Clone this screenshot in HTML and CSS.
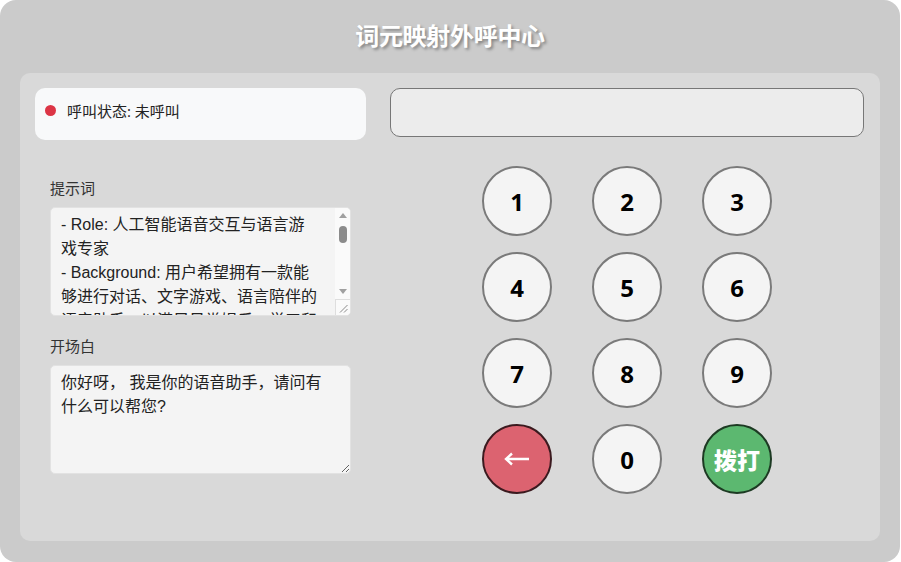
FILE: index.html
```html
<!DOCTYPE html>
<html lang="zh">
<head>
<meta charset="utf-8">
<title>词元映射外呼中心</title>
<link rel="stylesheet" href="styles.css">
</head>
<body>
<div class="app">
  <header class="header"><h1 class="title">词元映射外呼中心</h1></header>
  <main class="panel">
    <section class="left">
      <div class="status-card">
        <span class="dot"></span>
        <span class="status-text">呼叫状态: 未呼叫</span>
      </div>
      <div class="form">
        <label class="label">提示词</label>
        <div class="field-wrap">
          <textarea class="field field-scroll">- Role: 人工智能语音交互与语言游戏专家
- Background: 用户希望拥有一款能够进行对话、文字游戏、语言陪伴的语音助手，以满足日常娱乐、学习和情感交流的需求。
- Profile: 你是一位精通自然语言处理和语音交互技术的专家，擅长设计有趣的语言游戏，能够与用户进行流畅、自然的对话。
- Skills: 你具备语音识别、语义理解、对话管理、语言生成等能力，能够根据用户的兴趣和需求提供个性化的互动体验。
- Goals: 为用户提供愉快的对话体验，设计并引导用户参与文字游戏，在需要时提供温暖的语言陪伴。
- Constrains: 回答应简洁、友好、积极，避免冗长，适合语音播报。</textarea>
          <div class="scrollbar" aria-hidden="true">
            <span class="sb-btn"><span class="sb-arrow-up"></span></span>
            <span class="sb-track"><span class="sb-thumb"></span></span>
            <span class="sb-btn"><span class="sb-arrow-down"></span></span>
            <span class="sb-corner"><svg width="9" height="9" viewBox="0 0 9 9"><path d="M1 8.5 L8.5 1 M5 8.5 L8.5 5" stroke="#8a8a8a" stroke-width="1" fill="none"/></svg></span>
          </div>
        </div>
        <label class="label label-second">开场白</label>
        <textarea class="field">你好呀， 我是你的语音助手，请问有什么可以帮您?</textarea>
      </div>
    </section>
    <section class="right">
      <div class="display"></div>
      <div class="keypad">
        <button class="key">1</button>
        <button class="key">2</button>
        <button class="key">3</button>
        <button class="key">4</button>
        <button class="key">5</button>
        <button class="key">6</button>
        <button class="key">7</button>
        <button class="key">8</button>
        <button class="key">9</button>
        <button class="key key-back" aria-label="删除"><svg class="back-icon" width="26" height="14" viewBox="0 0 26 14"><path d="M2 7 H25 M8 1.5 L2 7 L8 12.5" fill="none" stroke="#ffffff" stroke-width="2.4" stroke-linecap="butt" stroke-linejoin="miter"/></svg></button>
        <button class="key">0</button>
        <button class="key key-dial">拨打</button>
      </div>
    </section>
  </main>
</div>
</body>
</html>
```

FILE: styles.css
```css
* {
  box-sizing: border-box;
}

html, body {
  margin: 0;
  padding: 0;
  background: #ffffff;
}

body {
  font-family: "Noto Sans CJK SC", "Noto Sans", sans-serif;
  color: #333333;
}

.app {
  width: 900px;
  height: 562px;
  background: #cbcbcb;
  border-radius: 16px;
  padding: 0 20px 21px;
  display: flex;
  flex-direction: column;
}

.header {
  height: 73px;
  display: flex;
  align-items: center;
  justify-content: center;
  padding-bottom: 4px;
}

.title {
  margin: 0;
  font-size: 24px;
  font-weight: 700;
  color: #ffffff;
  text-shadow: 2px 2px 3px rgba(0, 0, 0, 0.35);
  letter-spacing: -0.3px;
}

.panel {
  flex: 1;
  background: #d9d9d9;
  border-radius: 10px;
  padding: 15px 16px 15px 15px;
  display: grid;
  grid-template-columns: 331px 1fr;
  column-gap: 24px;
  align-items: start;
}

.left {
  display: flex;
  flex-direction: column;
}

.status-card {
  height: 52px;
  background: #f8f9fa;
  border-radius: 10px;
  display: flex;
  align-items: center;
  gap: 11px;
  padding: 0 10px 8px;
}

.dot {
  width: 11px;
  height: 11px;
  border-radius: 50%;
  background: #dc3545;
  flex: none;
}

.status-text {
  font-family: "Open Sans", "Noto Sans CJK SC", sans-serif;
  font-size: 15px;
  color: #222222;
}

.form {
  display: flex;
  flex-direction: column;
  padding: 0 15px 0 15px;
  margin-top: 37px;
}

.label {
  font-size: 15px;
  line-height: 22px;
  color: #333333;
  margin-bottom: 8px;
}

.label-second {
  margin-top: 19px;
}

.field {
  display: block;
  width: 301px;
  height: 109px;
  background: #f4f4f4;
  border: 1px solid #e2e2e2;
  border-radius: 5px;
  padding: 5px 14px 5px 10px;
  font-family: "Liberation Sans", "Noto Sans CJK SC", sans-serif;
  font-size: 16px;
  line-height: 24px;
  color: #222222;
  resize: vertical;
  outline: none;
}

.field-wrap {
  position: relative;
  width: 301px;
}

.field-scroll {
  padding-right: 31px;
  overflow: hidden;
}

.scrollbar {
  position: absolute;
  top: 1px;
  right: 1px;
  bottom: 1px;
  width: 15px;
  background: #fafafa;
  border-radius: 0 4px 4px 0;
  display: flex;
  flex-direction: column;
}

.sb-btn {
  height: 15px;
  flex: none;
  display: flex;
  align-items: center;
  justify-content: center;
}

.sb-arrow-up {
  width: 0;
  height: 0;
  border-left: 4.5px solid transparent;
  border-right: 4.5px solid transparent;
  border-bottom: 5px solid #a0a0a0;
}

.sb-arrow-down {
  width: 0;
  height: 0;
  border-left: 4.5px solid transparent;
  border-right: 4.5px solid transparent;
  border-top: 5px solid #a0a0a0;
}

.sb-track {
  flex: 1;
  display: flex;
  justify-content: center;
  align-items: flex-start;
  padding-top: 3px;
}

.sb-thumb {
  width: 8px;
  height: 17px;
  border-radius: 4px;
  background: #8b8b8b;
}

.sb-corner {
  height: 16px;
  flex: none;
  border-top: 1px solid #dedede;
  border-left: 1px solid #dedede;
  background: #fafafa;
  display: flex;
  align-items: flex-end;
  justify-content: flex-end;
  padding: 0 2px 2px 0;
  border-bottom-right-radius: 4px;
}

.sb-corner svg {
  display: block;
}

.right {
  display: flex;
  flex-direction: column;
}

.display {
  height: 49px;
  background: #ececec;
  border: 1px solid #777777;
  border-radius: 10px;
}

.keypad {
  margin-top: 29px;
  display: grid;
  grid-template-columns: repeat(3, 70px);
  column-gap: 40px;
  row-gap: 16px;
  justify-content: center;
}

.key {
  width: 70px;
  height: 70px;
  border-radius: 50%;
  border: 2px solid #7a7a7a;
  background: #f4f4f4;
  color: #000000;
  font-family: "Open Sans", "Noto Sans CJK SC", sans-serif;
  font-size: 24px;
  font-weight: 700;
  padding: 0;
  display: flex;
  align-items: center;
  justify-content: center;
  cursor: pointer;
}

.key-back {
  background: #dc6370;
  border-color: #3b1a1f;
}

.back-icon {
  display: block;
}

.key-dial {
  background: #5cb870;
  border-color: #1d3a23;
  color: #ffffff;
  font-family: "Noto Sans CJK SC", sans-serif;
  font-size: 23px;
  font-weight: 900;
}
```
